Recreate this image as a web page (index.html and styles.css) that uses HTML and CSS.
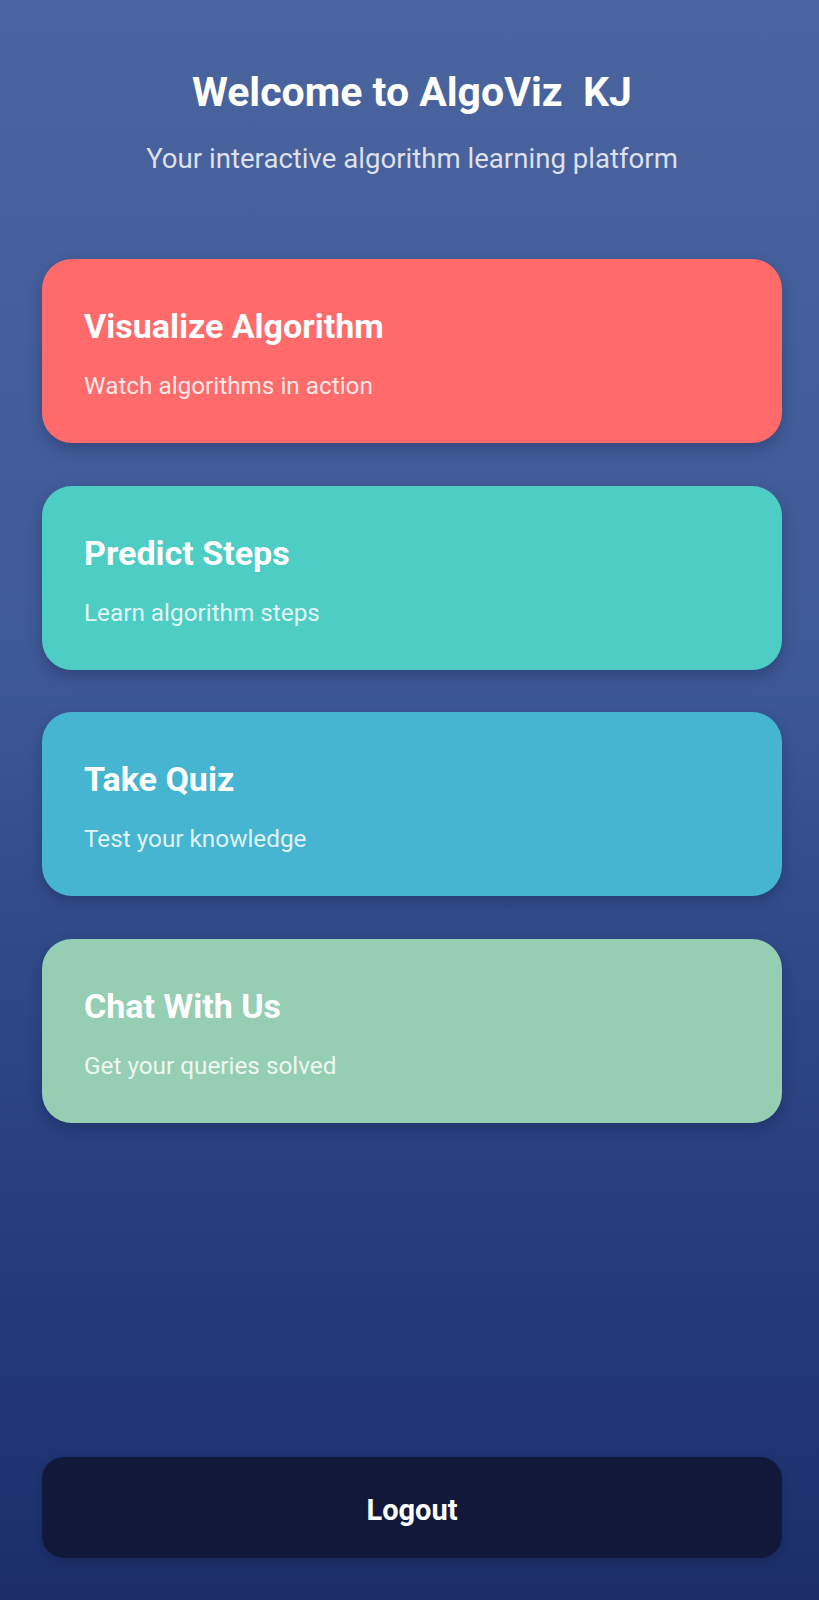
FILE: index.html
```html
<!DOCTYPE html>
<html lang="en">
<head>
<meta charset="utf-8">
<title>AlgoViz</title>
<link rel="stylesheet" href="styles.css">
</head>
<body>
<div class="screen">
  <header class="header">
    <h1 class="title">Welcome to AlgoViz&nbsp; KJ</h1>
    <p class="subtitle">Your interactive algorithm learning platform</p>
  </header>
  <main class="cards">
    <div class="card card-red">
      <h2 class="card-title">Visualize Algorithm</h2>
      <p class="card-text">Watch algorithms in action</p>
    </div>
    <div class="card card-teal">
      <h2 class="card-title">Predict Steps</h2>
      <p class="card-text">Learn algorithm steps</p>
    </div>
    <div class="card card-blue">
      <h2 class="card-title">Take Quiz</h2>
      <p class="card-text">Test your knowledge</p>
    </div>
    <div class="card card-green">
      <h2 class="card-title">Chat With Us</h2>
      <p class="card-text">Get your queries solved</p>
    </div>
  </main>
  <button class="logout">Logout</button>
</div>
</body>
</html>
```
FILE: styles.css
```css
* { box-sizing: border-box; }
html, body { margin: 0; padding: 0; }
body {
  font-family: Roboto, "Liberation Sans", sans-serif;
  background: #1b2e6a;
}
.screen {
  min-height: 1600px;
  display: flex;
  flex-direction: column;
  padding: 68px 37px 42px 42px;
  background: linear-gradient(180deg, #4a649f 0%, #3f5a98 40%, #2c4585 65%, #1b2e6a 100%);
}
.header {
  display: flex;
  flex-direction: column;
  align-items: center;
  gap: 27px;
}
.title {
  margin: 0;
  font-size: 41px;
  line-height: 48px;
  font-weight: 700;
  color: #ffffff;
}
.subtitle {
  margin: 0;
  font-size: 27.6px;
  line-height: 32px;
  color: rgba(255, 255, 255, 0.82);
}
.cards {
  display: flex;
  flex-direction: column;
  gap: 42.5px;
  margin-top: 84px;
}
.card {
  height: 184px;
  border-radius: 30px;
  padding: 47px 42px 0 42px;
  display: flex;
  flex-direction: column;
  gap: 26px;
  box-shadow: 0 6px 14px rgba(10, 20, 50, 0.28);
}
.card-red { background: #ff6b6b; }
.card-teal { background: #4ecdc4; }
.card-blue { background: #45b5d1; }
.card-green { background: #96ceb4; }
.card-title {
  margin: 0;
  font-size: 34px;
  line-height: 40px;
  font-weight: 700;
  color: #ffffff;
}
.card-text {
  margin: 0;
  font-size: 24.3px;
  line-height: 28px;
  color: rgba(255, 255, 255, 0.86);
}
.logout {
  margin-top: auto;
  height: 101px;
  padding: 4px 0 0 0;
  border: none;
  border-radius: 22px;
  background: #12183a;
  color: #ffffff;
  font-family: Roboto, "Liberation Sans", sans-serif;
  font-size: 29px;
  line-height: 32px;
  font-weight: 700;
  box-shadow: 0 4px 10px rgba(0, 0, 0, 0.15);
}
```
